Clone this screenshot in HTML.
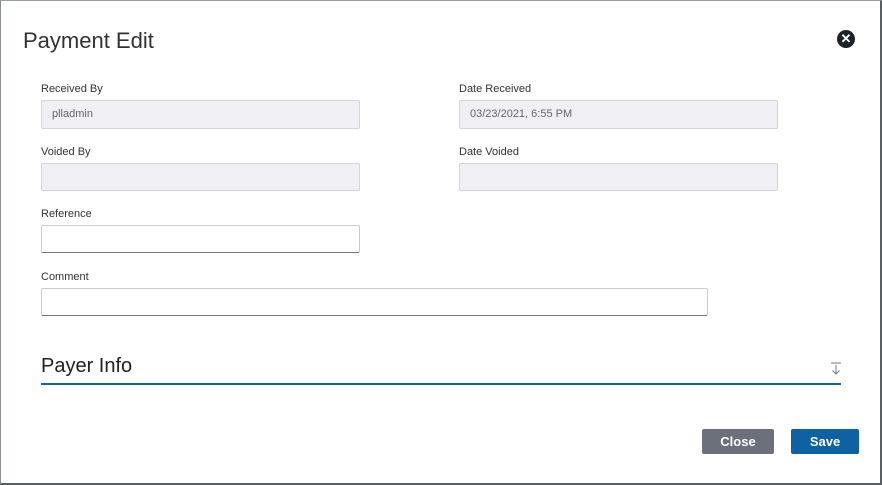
<!DOCTYPE html>
<html><head><style>
*{box-sizing:border-box;margin:0;padding:0}
body{width:882px;height:485px;background:#fff;font-family:"Liberation Sans",sans-serif;position:relative;overflow:hidden}
.frame{position:absolute;left:0;top:0;width:882px;height:485px;border-left:1px solid #8a8f96;border-top:1px solid #9aa0a6;border-right:2px solid #5a5f66;border-bottom:2px solid #5a5f66}
.t{position:absolute;left:23px;top:28px;font-size:22px;color:#333}
.lbl{position:absolute;font-size:11px;color:#333}
.in{position:absolute;height:29px;border:1px solid #d3d5da;border-radius:2px;background:#f0f0f4;font-size:11px;color:#666;padding:7px 10px}
.w{background:#fff;border:1px solid #ccc;border-bottom:1px solid #777}
.x{position:absolute;left:837px;top:30px;width:18px;height:18px;border-radius:50%;background:#1f2328;color:#fff;font-size:13px;font-weight:bold;text-align:center;line-height:18px}
.btn{position:absolute;top:429px;height:25px;border-radius:2px;color:#fff;font-weight:bold;font-size:13px;text-align:center;line-height:25px}
</style></head><body>
<div class="frame"></div>
<div class="t">Payment Edit</div>
<div class="x">✕</div>
<div class="lbl" style="left:41px;top:83px">Received By</div>
<div class="in" style="left:41px;top:100px;width:319px">plladmin</div>
<div class="lbl" style="left:459px;top:83px">Date Received</div>
<div class="in" style="left:459px;top:100px;width:319px">03/23/2021, 6:55 PM</div>
<div class="lbl" style="left:41px;top:146px">Voided By</div>
<div class="in" style="left:41px;top:163px;width:319px;height:28px"></div>
<div class="lbl" style="left:459px;top:146px">Date Voided</div>
<div class="in" style="left:459px;top:163px;width:319px;height:28px"></div>
<div class="lbl" style="left:41px;top:208px">Reference</div>
<div class="in w" style="left:41px;top:225px;width:319px;height:28px"></div>
<div class="lbl" style="left:41px;top:271px">Comment</div>
<div class="in w" style="left:41px;top:288px;width:667px;height:28px"></div>
<div style="position:absolute;left:41px;top:355px;font-size:20px;color:#222">Payer Info</div>
<svg style="position:absolute;left:830px;top:362px" width="12" height="13"><path d="M1 1H11M6 3V12M2.5 8.5L6 12L9.5 8.5" stroke="#777" fill="none" stroke-width="1"/></svg>
<div style="position:absolute;left:41px;top:383px;width:800px;height:2px;background:#0e65a6"></div>
<div class="btn" style="left:702px;width:72px;background:#6c707a">Close</div>
<div class="btn" style="left:791px;width:68px;background:#0e62a3">Save</div>
</body></html>
